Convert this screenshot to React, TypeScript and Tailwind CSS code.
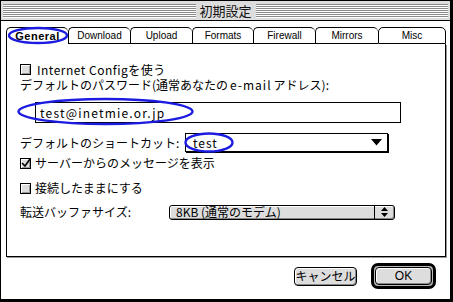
import React from 'react';

const TABS = ['General', 'Download', 'Upload', 'Formats', 'Firewall', 'Mirrors', 'Misc'];
const TAB_W = ['w-[62px]', 'w-[62px]', 'w-[62px]', 'w-[61px]', 'w-[62px]', 'w-[63px]', 'w-[68px]'];

const stripes =
  'bg-[image:repeating-linear-gradient(to_bottom,#8a8a8a_0px,#8a8a8a_1px,#ffffff_1px,#ffffff_2px)]';

const CheckBox: React.FC<{ checked?: boolean }> = ({ checked }) => (
  <div className="relative w-[11px] h-[11px] border border-black bg-[#dddddd] shadow-[inset_1px_1px_0_#ffffff,inset_-1px_-1px_0_#999999] shrink-0">
    {checked && (
      <svg className="absolute -left-[1px] -top-[2px]" width="12" height="12" viewBox="0 0 12 12">
        <path d="M2 6 L5 9 L10 2" stroke="#000" strokeWidth="1.6" fill="none" />
      </svg>
    )}
  </div>
);

const App: React.FC = () => {
  return (
    <div className="relative w-[453px] h-[302px] overflow-hidden bg-white text-black font-['Noto_Sans_CJK_JP',sans-serif] text-[12px] leading-none">
      <div className="flex flex-col w-full h-full border-l border-t border-black border-r-[3px] border-b-[3px]">
        {/* title bar */}
        <div className="h-[20px] shrink-0 flex items-center px-[2px] bg-[#dddddd] border-b border-black">
          <div className={`flex-1 h-[14px] ${stripes}`} />
          <div className="px-[4px] text-[13px] text-[#111]">初期設定</div>
          <div className={`flex-1 h-[14px] ${stripes}`} />
        </div>

        {/* body */}
        <div className="flex-1 flex flex-col pl-[5px]">
          {/* tabs */}
          <div className="flex mt-[6px] h-[17px]">
            {TABS.map((t, i) => (
              <div
                key={t}
                className={`${TAB_W[i]} h-[17px] flex items-center justify-center border-t border-l border-black rounded-t-[5px] font-['Liberation_Sans',sans-serif] ${
                  i === TABS.length - 1 ? 'border-r' : ''
                } ${i === 0 ? 'font-bold text-[11px] tracking-[0.5px]' : 'border-b text-[10px]'}`}
              >
                {t}
              </div>
            ))}
          </div>

          {/* panel */}
          <div className="w-[440px] h-[213px] flex flex-col pl-[13px] border-l border-r border-b border-black shadow-[1px_1px_0_#999999]">
            <div className="mt-[19px] h-[13px] flex items-center gap-[6px]">
              <CheckBox />
              <span className="tracking-[0.5px]">Internet Configを使う</span>
            </div>
            <div className="mt-[2px] h-[14px] flex items-center">
              デフォルトのパスワード(通常あなたの<span className="tracking-[1px] px-[2px]">e-mail</span>アドレス):
            </div>
            <div className="mt-[10px] ml-[15px] w-[366px] h-[21px] border border-black flex items-center pl-[4px] tracking-[1.2px]">
              test@inetmie.or.jp
            </div>
            <div className="mt-[10px] h-[19px] flex items-center">
              <span className="w-[165px]">デフォルトのショートカット:</span>
              <div className="w-[203px] h-[19px] border border-black shadow-[1px_1px_0_#000000] flex items-center pl-[7px] pr-[5px] justify-between">
                <span className="tracking-[1px]">test</span>
                <svg width="11" height="7" viewBox="0 0 11 7">
                  <path d="M0 0 H11 L5.5 6.5 Z" fill="#000" />
                </svg>
              </div>
            </div>
            <div className="mt-[4px] h-[14px] flex items-center gap-[4px]">
              <CheckBox checked />
              <span>サーバーからのメッセージを表示</span>
            </div>
            <div className="mt-[11px] h-[14px] flex items-center gap-[4px]">
              <CheckBox />
              <span>接続したままにする</span>
            </div>
            <div className="mt-[10px] h-[14px] flex items-center">
              <span className="w-[149px]">転送バッファサイズ:</span>
              <div className="w-[226px] h-[15px] rounded-[3px] border border-black bg-[#dddddd] shadow-[inset_1px_1px_0_#ffffff,inset_-1px_-1px_0_#888888] flex items-center">
                <span className="flex-1 pl-[6px]">8KB (通常のモデム)</span>
                <div className="w-[20px] h-full border-l border-black flex items-center justify-center">
                  <svg width="7" height="10" viewBox="0 0 7 10">
                    <path d="M3.5 0 L7 4 H0 Z M0 6 H7 L3.5 10 Z" fill="#000" />
                  </svg>
                </div>
              </div>
            </div>
          </div>

          {/* buttons */}
          <div className="mt-[6px] flex justify-end items-center gap-[14px] pr-[14px]">
            <div className="w-[63px] h-[19px] rounded-[4px] border border-black bg-[#dddddd] shadow-[inset_1px_1px_0_#ffffff,inset_-1px_-1px_0_#888888] flex items-center justify-center">
              キャンセル
            </div>
            <div className="w-[65px] h-[26px] rounded-[7px] border-[3px] border-black bg-[#bbbbbb] p-[1px]">
              <div className="w-full h-full rounded-[4px] border border-black bg-[#dddddd] shadow-[inset_1px_1px_0_#ffffff,inset_-1px_-1px_0_#888888] flex items-center justify-center font-['Liberation_Sans',sans-serif] text-[12px]">
                OK
              </div>
            </div>
          </div>
        </div>
      </div>

      {/* annotation ellipses */}
      <svg className="absolute left-0 top-0 pointer-events-none" width="453" height="302">
        <ellipse cx="38" cy="35.5" rx="29" ry="7.5" fill="none" stroke="#1c1ce0" strokeWidth="2.4" />
        <ellipse cx="105.5" cy="111.5" rx="87" ry="12.5" fill="none" stroke="#1c1ce0" strokeWidth="2.4" />
        <ellipse cx="209" cy="142.5" rx="23.5" ry="9" fill="none" stroke="#1c1ce0" strokeWidth="2.4" />
      </svg>
    </div>
  );
};

export default App;
